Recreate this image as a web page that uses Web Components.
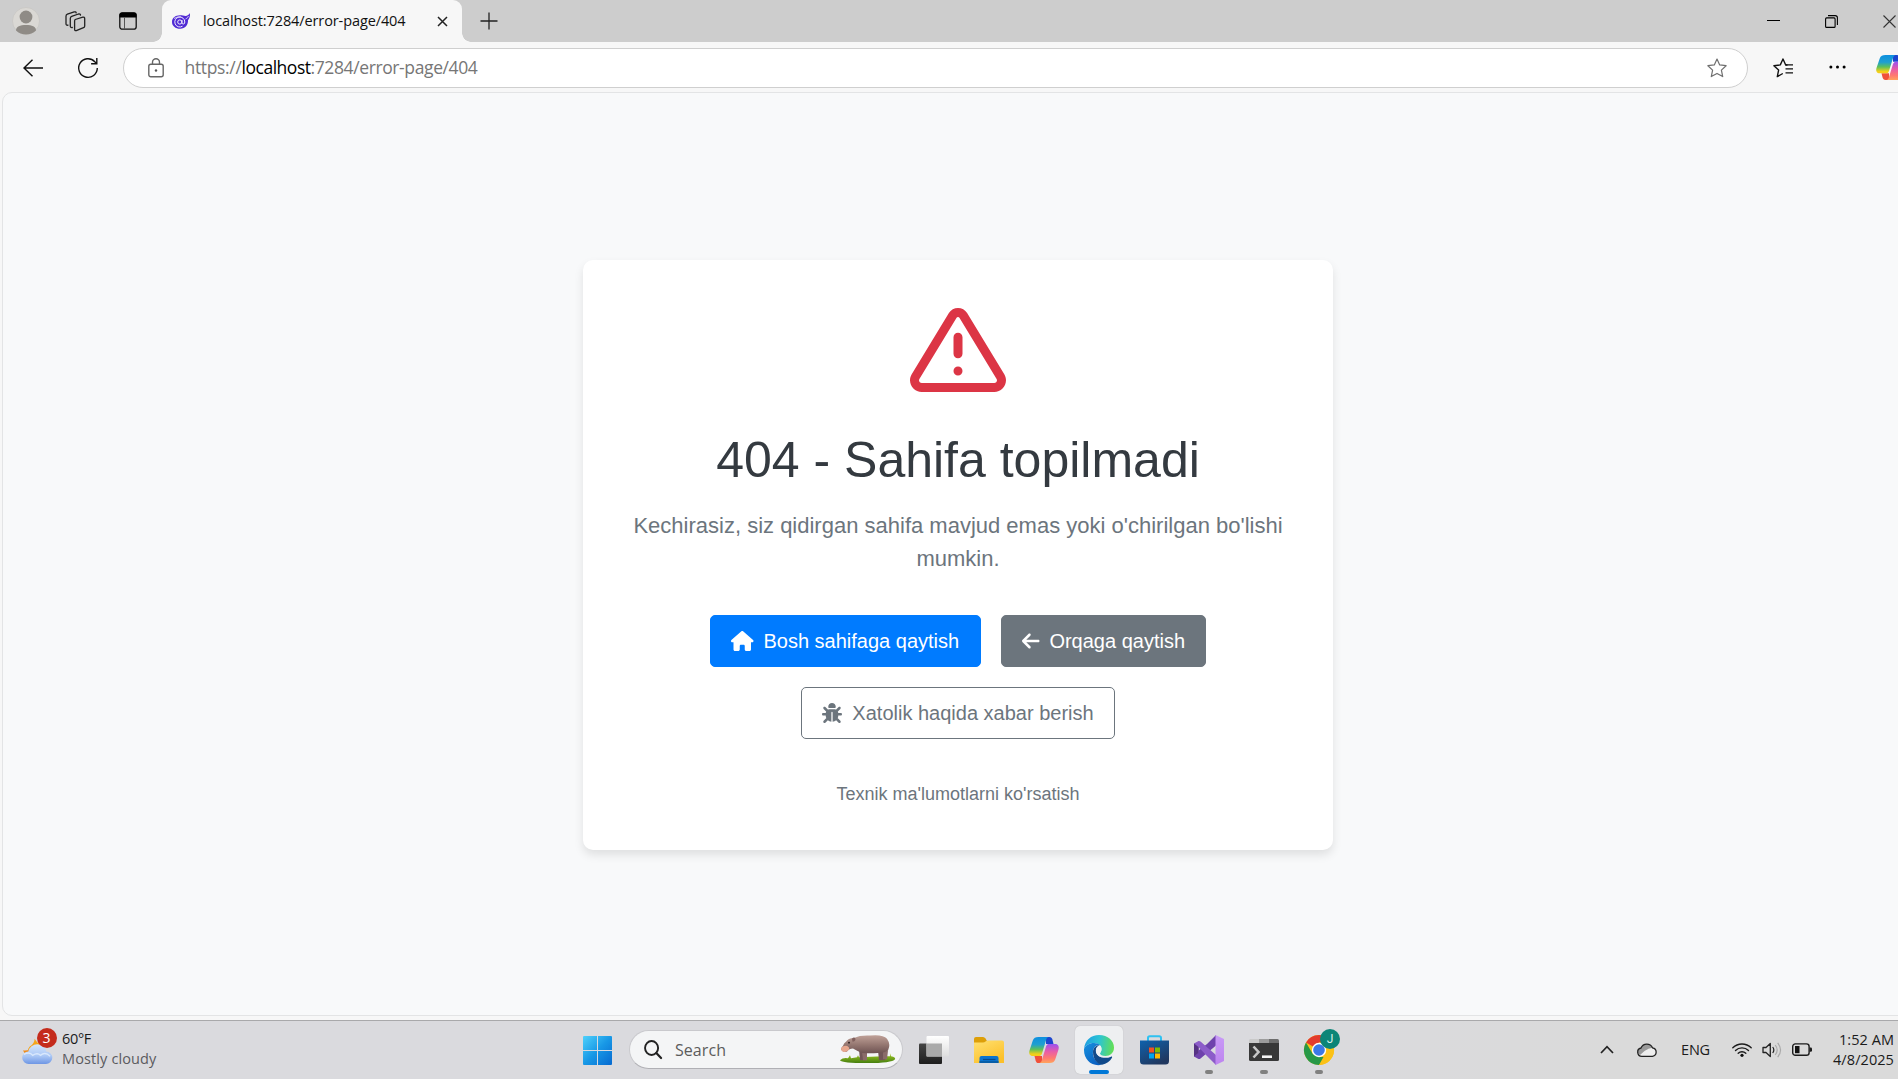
<!DOCTYPE html>
<html lang="uz">
<head>
<meta charset="utf-8">
<title>404 - Sahifa topilmadi</title>
<style>
html,body{margin:0;height:100%;overflow:hidden}
body{background:#f7f7f7;font-family:"Liberation Sans",Arial,sans-serif}
</style>
</head>
<body>
<desktop-screen></desktop-screen>
<script>
const COPILOT = p => `<defs>
<linearGradient id="${p}a" x1="0" y1="0" x2="0" y2="1"><stop offset="0" stop-color="#0d8fe0"/><stop offset=".4" stop-color="#1f9fd0"/><stop offset=".65" stop-color="#5cc05a"/><stop offset=".9" stop-color="#f3cf19"/></linearGradient>
<linearGradient id="${p}b" x1="0" y1="0" x2="0" y2="1"><stop offset="0" stop-color="#9a52f0"/><stop offset=".4" stop-color="#e85ca8"/><stop offset=".75" stop-color="#ff7a70"/><stop offset="1" stop-color="#ffa45c"/></linearGradient></defs>
<path d="M17 2h3.500c1.700 0 2.400 1 2.900 2.600L24.500 9H17z" fill="#1c45cf"/>
<path d="M13 28H9.500c-1.700 0-2.400-1-2.900-2.600L5.500 21H13z" fill="#f0503a"/>
<path d="M9.500 2h10c-1.300.3-2 1.500-2.500 3.200L13 18.500C12.300 20.600 11.300 21 9.500 21H4C.6 21-.3 18.500.5 15.500L3.800 5.500C4.600 3 6.500 2 9.500 2z" fill="url(#${p}a)"/>
<path d="M20.500 28h-10c1.300-.3 2-1.500 2.500-3.200L17 11.500c.7-2.100 1.700-2.500 3.500-2.500H26c3.400 0 4.300 2.500 3.500 5.500l-3.300 10c-.8 2.500-2.700 3.500-5.700 3.500z" fill="url(#${p}b)"/>`;

const ICONS = {
avatar:['0 0 28 28',`<circle cx="14" cy="14" r="13.5" fill="#dad8d4" stroke="#c4c3c0" stroke-width=".6"/><circle cx="14" cy="10" r="6.400" fill="#8f8b86"/><path d="M4 23.500c0-4 4-5.500 10-5.500s10 1.500 10 5.500c-5 5.200-15 5.200-20 0z" fill="#8f8b86"/>`],
spaces:['0 0 21 21',`<g fill="none" stroke="#222" stroke-width="1.300" stroke-linejoin="round" stroke-linecap="round"><path d="M10.200 8.500 17.800 6.200q1.900-.4 1.900 1.500v7.200q0 1.200-1.200 1.700l-7.200 3q-1.700.5-1.700-1.300v-8q0-1.400 .6-1.800z"/><path d="M7.300 16.500q-2 .3-2-1.500V7.400q0-1.500 1.400-2L13.500 3q1.700-.4 2 1"/><path d="M3 14.200q-2 .3-2-1.500V5.200q0-1.500 1.400-2L9.200.9q1.700-.4 2 1"/></g>`],
vtabs:['0 0 18 18',`<rect x=".8" y=".8" width="16.400" height="16.400" rx="2.500" fill="none" stroke="#111" stroke-width="1.300"/><path d="M.5 5.500V3Q.5.500 3 .500h12q2.500 0 2.500 2.500v2.500z" fill="#000"/><path d="M5.500 5.500v11.500" stroke="#555" stroke-width="1"/>`],
blazor:['0 0 18 16',`<path d="M18 0c.2 3.500-.5 5.400-2 7.300.2 4.800-2.800 8.500-7.800 8.500C3.400 15.800 0 12.700 0 8.900 0 5 3.200 2.200 8 2.200c2.400 0 3.700.7 5.400.7C15.400 2.900 17 1.800 18 0z" fill="#512bd4"/><path d="M10.500 13.200A5 5 0 1 1 12.800 9q0 2-1.500 2T10 9.500V7" fill="none" stroke="#f2edff" stroke-width="1"/><circle cx="7.800" cy="9" r="2.100" fill="none" stroke="#f2edff" stroke-width="1"/><path d="M2 5.500Q5 3.500 9 3.800M13.500 6q2.500-1 3-3" stroke="#e6deff" stroke-width=".8" fill="none"/>`],
x:['0 0 11 11',`<path d="M1 1l9 9M10 1l-9 9" stroke="#222" stroke-width="1.500"/>`],
plus:['0 0 18 18',`<path d="M9 .5v17M.5 9h17" stroke="#222" stroke-width="1.300"/>`],
min:['0 0 13 13',`<path d="M0 6.500h13" stroke="#000"/>`],
restore:['0 0 13 13',`<rect x=".6" y="2.900" width="9.500" height="9.500" rx="1" fill="none" stroke="#000" stroke-width="1.100"/><path d="M3 .6h7.200q2.200 0 2.200 2.200V10" fill="none" stroke="#000" stroke-width="1.100"/>`],
close:['0 0 13 13',`<path d="M.5.500l12 12M12.500.500l-12 12" stroke="#333" stroke-width="1.100"/>`],
back:['0 0 20 18',`<path d="M9.500.7 1 9l8.500 8.300M1 9h19" fill="none" stroke="#111" stroke-width="1.400"/>`],
refresh:['0 0 20 20',`<path d="M19.300 10A9.300 9.300 0 1 1 16.800 3.700L18.500 5.300M18.800 0v5.700h-5.700" fill="none" stroke="#111" stroke-width="1.400"/>`],
lock:['0 0 16 20',`<rect x=".8" y="6.300" width="14.400" height="12.500" rx="2" fill="none" stroke="#666" stroke-width="1.400"/><path d="M4.500 6V4.200a3.500 3.500 0 0 1 7 0V6" fill="none" stroke="#666" stroke-width="1.400"/><circle cx="8" cy="12.500" r="1.200" fill="#555"/>`],
star:['0 0 20 20',`<path d="M10 1l2.700 5.900 6.400.8-4.700 4.400 1.300 6.500L10 15.400l-5.700 3.200 1.300-6.500L.9 7.700l6.400-.8z" fill="none" stroke="#6f6f6f" stroke-width="1.200" stroke-linejoin="round"/>`],
favs:['0 0 20 20',`<path d="M14.500 7H12.700L10 1 7.300 6.900.9 7.700l4.700 4.400L4.300 18.600 9.800 15.500" fill="none" stroke="#111" stroke-width="1.400" stroke-linejoin="round"/><path d="M12.500 6.800H20M12.500 10.800H20M12.500 14.800H20" stroke="#111" stroke-width="1.300"/>`],
dots:['0 0 18 4',`<circle cx="2" cy="2" r="1.600"/><circle cx="9" cy="2" r="1.600"/><circle cx="16" cy="2" r="1.600"/>`],
copilot:['0 0 30 30',COPILOT('c')],
alert:['0 0 512 512',`<path fill="#dc3545" d="M248.400 84.300c1.600-2.700 4.500-4.300 7.600-4.300s6 1.600 7.600 4.300L461.900 410c1.400 2.300 2.100 4.900 2.100 7.500c0 8-6.500 14.500-14.500 14.500H62.500c-8 0-14.500-6.500-14.500-14.500c0-2.700 .7-5.300 2.100-7.500L248.400 84.300zm-41-25L9.100 385c-6 9.800-9.100 21-9.100 32.500C0 452 28 480 62.500 480h387c34.500 0 62.500-28 62.500-62.500c0-11.500-3.200-22.700-9.100-32.500L304.600 59.300C294.300 42.400 275.900 32 256 32s-38.300 10.400-48.600 27.300zM280 368a24 24 0 1 0 -48 0 24 24 0 1 0 48 0zm0-180c0-13.300-10.700-24-24-24s-24 10.700-24 24v88c0 13.300 10.700 24 24 24s24-10.700 24-24V188z"/>`],
house:['0 0 576 512',`<path fill="currentColor" d="M575.800 255.500c0 18-15 32.100-32 32.100h-32l.7 160.200c0 2.700-.2 5.400-.5 8.100V472c0 22.100-17.900 40-40 40H456c-1.100 0-2.200 0-3.300-.1c-1.400 .1-2.800 .1-4.200 .1H416 392c-22.100 0-40-17.900-40-40V448 384c0-17.700-14.300-32-32-32H256c-17.700 0-32 14.300-32 32v64 24c0 22.100-17.900 40-40 40H160 128.100c-1.500 0-3-.1-4.500-.2c-1.200 .1-2.400 .2-3.600 .2H104c-22.100 0-40-17.900-40-40V360c0-.9 0-1.900 .1-2.800V287.600H32c-18 0-32-14-32-32.100c0-9 3-17 10-24L266.400 8c7-7 15-8 22-8s15 2 21 7L564.800 231.500c8 7 12 15 11 24z"/>`],
arrow:['0 0 448 512',`<path fill="currentColor" d="M9.400 233.400c-12.500 12.500-12.500 32.800 0 45.300l160 160c12.500 12.500 32.800 12.500 45.300 0s12.500-32.800 0-45.300L109.200 288 416 288c17.700 0 32-14.300 32-32s-14.300-32-32-32l-306.700 0L214.600 118.600c12.500-12.500 12.500-32.800 0-45.300s-32.800-12.500-45.300 0l-160 160z"/>`],
bug:['0 0 512 512',`<path fill="currentColor" d="M256 0c53 0 96 43 96 96v3.600c0 15.700-12.700 28.400-28.400 28.400H188.400c-15.700 0-28.400-12.700-28.400-28.400V96c0-53 43-96 96-96zM41.400 105.400c12.500-12.500 32.800-12.500 45.300 0l64 64c.7 .7 1.300 1.400 1.900 2.100c14.200-7.300 30.400-11.400 47.500-11.400H312c17.100 0 33.200 4.100 47.500 11.400c.6-.7 1.200-1.400 1.900-2.100l64-64c12.500-12.500 32.800-12.500 45.300 0s12.500 32.800 0 45.300l-64 64c-.7 .7-1.400 1.300-2.100 1.900c6.200 12 10.100 25.300 11.100 39.500H480c17.700 0 32 14.300 32 32s-14.300 32-32 32H416c0 24.600-5.500 47.800-15.400 68.600c2.200 1.300 4.200 2.900 6 4.800l64 64c12.500 12.500 12.500 32.800 0 45.300s-32.800 12.500-45.300 0l-63.100-63.100c-24.500 21.800-55.800 36.200-90.300 39.600V240c0-8.800-7.200-16-16-16s-16 7.200-16 16V479.200c-34.500-3.400-65.800-17.800-90.300-39.600L86.600 502.600c-12.500 12.500-32.800 12.500-45.300 0s-12.500-32.800 0-45.300l64-64c1.900-1.900 3.900-3.400 6-4.800C101.500 367.800 96 344.600 96 320H32c-17.700 0-32-14.300-32-32s14.300-32 32-32H96.300c1.100-14.100 5-27.500 11.100-39.500c-.7-.6-1.400-1.200-2.100-1.900l-64-64c-12.500-12.500-12.500-32.800 0-45.300z"/>`],
weather:['0 0 32 32',`<defs><linearGradient id="wc" x1="0" y1="0" x2="0" y2="1"><stop offset="0" stop-color="#d5e6fd"/><stop offset=".6" stop-color="#a9c6f5"/><stop offset="1" stop-color="#6e96e4"/></linearGradient></defs><path d="M13 5l3 4 4-2v14H9L6 18q0-3 2-5 5-3 5-8z" fill="#f6a51c"/><path d="M1 17q8 1 11-6l2 8-9 4z" fill="#f08c1a"/><path d="M7 31a6.500 6.500 0 0 1-.5-13 9.500 9.500 0 0 1 18.500 0 6.500 6.500 0 0 1-.5 13z" fill="url(#wc)"/><path d="M2 21q6-3 9 1 5-3 8 0 5-4 10 1" fill="none" stroke="#eaf3ff" stroke-width="1.500" opacity=".7"/>`],
win:['0 0 29 29',`<defs><linearGradient id="wg" gradientUnits="userSpaceOnUse" x1="0" y1="0" x2="29" y2="29"><stop offset="0" stop-color="#4fd1fb"/><stop offset=".5" stop-color="#1898e6"/><stop offset="1" stop-color="#0669d0"/></linearGradient></defs><path fill="url(#wg)" d="M1 0h13v14H0V1q0-1 1-1zM15 0h13q1 0 1 1v13H15zM0 15h14v14H1q-1 0-1-1zM15 15h14v13q0 1-1 1H15z"/>`],
search:['0 0 19 19',`<circle cx="8" cy="8" r="6.900" fill="none" stroke="#222" stroke-width="2"/><path d="M13 13l5 5" stroke="#222" stroke-width="2.400" stroke-linecap="round"/>`],
hippo:['0 0 56 30',`<defs><linearGradient id="hp" x1="0" y1="0" x2="0" y2="1"><stop offset="0" stop-color="#c0a299"/><stop offset=".55" stop-color="#93756f"/><stop offset="1" stop-color="#6d5252"/></linearGradient><linearGradient id="gr" x1="0" y1="0" x2="0" y2="1"><stop offset="0" stop-color="#a4cc24"/><stop offset="1" stop-color="#457f10"/></linearGradient></defs><path d="M0 26q3-3 8-2l2-3 1 3 6-1 1-2 1 2 24-1 2-2 0 2 5 0 1-3 0 3q5 1 4 3-3 4-28 4T0 26z" fill="url(#gr)"/><path d="M19 15l8 1-1 10h-6zM38 16h8l-1 10h-6z" fill="#715557"/><path d="M22 17h5l0 9h-4zM43 16h5l-1 9h-4z" fill="#8a6b69"/><path d="M6 7q2-4 8-4Q20 0 30 .5 43-1 47 4q4 6 1 12-4 3-10 2.500-9 1-16 0Q16 16 13 14q-4 0-6 3-4 1-6-2 0-2 2-4 1-3 3-4z" fill="url(#hp)"/><path d="M1 14q1-3 5-3 4 1 3 4-2 3-5 2.500Q1 17 1 14z" fill="#e7a78e"/><path d="M12 4q2-3 3.500 0 0 3-3 3" fill="#80605d"/><circle cx="9" cy="8" r=".9" fill="#241818"/>`],
taskview:['0 0 30 28',`<defs><linearGradient id="t1" x1="0" y1="0" x2="0" y2="1"><stop offset="0" stop-color="#444"/><stop offset="1" stop-color="#1e1e1e"/></linearGradient><linearGradient id="t2" x1="0" y1="0" x2="0" y2="1"><stop offset="0" stop-color="#fff"/><stop offset="1" stop-color="#dedede"/></linearGradient></defs><rect y="7.500" width="23" height="20.500" rx="1" fill="url(#t1)"/><rect x="7.500" width="22.500" height="20.500" rx="1" fill="url(#t2)"/><rect x="7.500" y="7.500" width="15.500" height="13" fill="#aaa"/>`],
folder:['0 0 30 27',`<defs><linearGradient id="f1" x1="0" y1="0" x2=".6" y2="1"><stop offset="0" stop-color="#ffe070"/><stop offset="1" stop-color="#fcc02a"/></linearGradient></defs><path d="M0 2q0-2 2-2h7q1.500 0 2.500 1.500L13 4v8H0z" fill="#dd9f09"/><path d="M0 5.500h9q1.500 0 2.500-1T14 3.500h14q2 0 2 2V26H0z" fill="url(#f1)"/><path d="M5.500 26v-5q0-2 2-2h15q2 0 2 2v5z" fill="#0b74cf"/><path d="M5.500 26v-2h19v2" fill="#085ea8"/><path d="M9 22.500h12.500" stroke="#074a8c" stroke-width="1.200"/>`],
edge:['0 0 30 30',`<defs><linearGradient id="e1" x1="0" y1=".3" x2="1" y2=".4"><stop offset="0" stop-color="#1d9de2"/><stop offset=".5" stop-color="#2cc4d4"/><stop offset="1" stop-color="#63df55"/></linearGradient><linearGradient id="e2" x1="0" y1="0" x2=".7" y2="1"><stop offset="0" stop-color="#1691df"/><stop offset="1" stop-color="#0b5fc0"/></linearGradient></defs><path d="M0 14C1 5 7 0 15 0c9 0 15 6 15 12.500C30 18 26 21 21.500 21c-3.500 0-5.500-1.500-5.500-2.500s1.500-1.800 1.500-4.500c0-3.500-3.500-6-7.500-6C5 8 1.500 10.500 0 14z" fill="url(#e1)"/><path d="M0 14c1.500-3.500 5-6 10-6 2.500 0 4.500.8 6 2-4-.5-6.500 2.500-7 6-1 7 4 12 9 13.700C8 32 0 25 0 15z" fill="url(#e2)"/><path d="M16 10c-4 0-7 3-7 7 0 7 4 12 9 12.700 4.500-.7 8-3.500 10-7 .4-.9-.3-1.400-1-1-7 3-15 0-15-6.500 0-2.700 2-4.500 4-5.200z" fill="#114a8b"/><path d="M16.500 10.700c-3 .3-4.700 2.300-4.700 5 0 3 2 5.500 5.500 6.600-1.600-2-1.500-3.300-1.300-3.800.2-1.200 1.500-1.800 1.500-4.500 0-1.400-.3-2.300-1-3.300z" fill="#eef1f4"/>`],
store:['0 0 29 30',`<defs><linearGradient id="s1" x1="0" y1="0" x2=".6" y2="1"><stop offset="0" stop-color="#0f62ad"/><stop offset="1" stop-color="#20375f"/></linearGradient></defs><path d="M8 7V3q0-1.800 1.800-1.800h9.400Q21 1.200 21 3v4" fill="none" stroke="#2fc1f1" stroke-width="2"/><path d="M0 5.500h29V26q0 3.500-3.500 3.500h-22Q0 29.500 0 26z" fill="url(#s1)"/><path d="M9 12.500h5v5H9z" fill="#f25022"/><path d="M15 12.500h5v5h-5z" fill="#7fba00"/><path d="M9 18.500h5v5H9z" fill="#00a4ef"/><path d="M15 18.500h5v5h-5z" fill="#ffb900"/>`],
vs:['0 0 30 30',`<defs><linearGradient id="v1" x1="0" y1="0" x2="0" y2="1"><stop offset="0" stop-color="#c99bf7"/><stop offset="1" stop-color="#bd84ef"/></linearGradient></defs><path d="M0 8.500 4.500 12v6L0 21.500z" fill="#563284"/><path d="M0 21.500 4.500 24q1 .3 2-.5L22 10.500V0L13 9 0 19z" fill="#6e42ac"/><path d="M0 8.500 4.500 6q1-.3 2 .5L22 20v10L11 19 4.500 12 4.500 18 0 21.500z" fill="#8c5cc9"/><path d="M0 8.500 4.500 12v6L0 21.500z" fill="#563284"/><path d="M21.500 0 30 4v22l-8.500 4z" fill="url(#v1)"/>`],
term:['0 0 30 22',`<path d="M0 4V1.500Q0 0 1.500 0H10v4z" fill="#c9c9c9"/><path d="M10 0h10v4H10z" fill="#9c9c9c"/><path d="M20 0h8.500Q30 0 30 1.500V4H20z" fill="#6d6d6d"/><path d="M0 4h30v16.500q0 1.500-1.500 1.500h-27Q0 22 0 20.500z" fill="#383838"/><path d="M4.500 7.500 9.500 13l-5 5.500" fill="none" stroke="#c7c7c7" stroke-width="2.600"/><path d="M13 17.700h10" stroke="#f5f5f5" stroke-width="2.600"/>`],
chrome:['0 0 30 30',`<circle cx="15" cy="15" r="15" fill="#fbc116"/><path d="M15 15 2 7.500A15 15 0 0 1 28 7.500H15z" fill="#e33b2e"/><path d="M2 7.500 8.500 18.500 15 22h6.500L15 30A15 15 0 0 1 2 7.500z" fill="#279847"/><path d="M28 7.500H15v7l6.500 4L15 30A15 15 0 0 0 28 7.500z" fill="#fbc116"/><circle cx="15" cy="15" r="7.200" fill="#fff"/><circle cx="15" cy="15" r="5.800" fill="#3b78e7"/>`],
chev:['0 0 14 9',`<path d="M1 8l6-6.300L13 8" fill="none" stroke="#222" stroke-width="1.700"/>`],
cloud:['0 0 20 14',`<path d="M5 13.300A4.200 4.200 0 0 1 4 5 6.300 6.300 0 0 1 15.500 4.800 4.300 4.300 0 0 1 15.500 13.300z" fill="#eee"/><path d="M.8 9.500Q1 5.700 4 5a6.300 6.300 0 0 1 11.500-.2q-4 .2-8 3.200L3 12z" fill="#9a9a9a"/><path d="M5 13.300A4.200 4.200 0 0 1 4 5 6.300 6.300 0 0 1 15.500 4.800 4.300 4.300 0 0 1 15.500 13.300z" fill="none" stroke="#222" stroke-width="1.300"/>`],
wifi:['0 0 20 15',`<g fill="none" stroke="#1c1c1c" stroke-width="1.400" stroke-linecap="round"><path d="M.8 5.800a13 13 0 0 1 18.400 0M3.500 8.600a9.200 9.200 0 0 1 13 0M6.200 11.300a5.400 5.400 0 0 1 7.600 0"/></g><circle cx="10" cy="13.300" r="1.600" fill="#111"/>`],
vol:['0 0 20 16',`<path d="M1 5.500h3L8.300 1.500v13L4 10.500H1z" fill="none" stroke="#222" stroke-width="1.300" stroke-linejoin="round"/><path d="M10.700 5q2.300 3 0 6" fill="none" stroke="#222" stroke-width="1.200"/><path d="M13.200 3q4 5 0 10M15.700.8q5.700 7.200 0 14.400" fill="none" stroke="#aaa" stroke-width="1.200"/>`],
batt:['0 0 20 13',`<rect x=".7" y=".9" width="16.400" height="11.400" rx="2.600" fill="none" stroke="#1c1c1c" stroke-width="1.400"/><path d="M3 3h4.500v7.200H3z" fill="#111"/><path d="M17.500 4.500h1.200q1.300 0 1.300 1.100v2q0 1.200-1.300 1.200h-1.200z" fill="#1c1c1c"/>`]
};

class Base extends HTMLElement{
  constructor(){super();this.attachShadow({mode:'open'});}
}
function define(name,html){
  const t=document.createElement('template');t.innerHTML=html;
  customElements.define(name,class extends Base{
    constructor(){super();this.shadowRoot.append(t.content.cloneNode(true));}
  });
}

/* <ui-icon name w h>: inline SVG from the table above */
customElements.define('ui-icon',class extends Base{
  connectedCallback(){
    const [vb,body]=ICONS[this.getAttribute('name')];
    const w=this.getAttribute('w'),h=this.getAttribute('h');
    this.shadowRoot.innerHTML=`<style>:host{display:block;flex:none;width:${w}px;height:${h}px}svg{display:block;overflow:visible}</style><svg width="${w}" height="${h}" viewBox="${vb}" preserveAspectRatio="none">${body}</svg>`;
  }
});

/* <fit-label width>: one line of text tracked to a fixed width */
customElements.define('fit-label',class extends Base{
  connectedCallback(){
    this.shadowRoot.innerHTML=`<style>:host{display:block;flex:none;white-space:nowrap;font-family:"Open Sans","Noto Sans",sans-serif}span{display:inline-block}</style><span><slot></slot></span>`;
    const s=this.shadowRoot.querySelector('span'),want=+this.getAttribute('width');
    const n=this.textContent.length;
    s.style.letterSpacing=((want-s.getBoundingClientRect().width)/n)+'px';
    this.style.width=want+'px';
  }
});

define('tab-strip',`<style>
:host{display:flex;align-items:center;height:42px;background:#cdcdcd;overflow:hidden}
.tab{display:flex;align-items:center;width:300px;height:42px;margin-left:25px;background:#f7f7f7;border-radius:9px 9px 0 0;position:relative}
.tab::before,.tab::after{content:"";position:absolute;bottom:0;width:9px;height:9px}
.tab::before{left:-9px;background:radial-gradient(circle at 0 0,transparent 8.500px,#f7f7f7 9px)}
.tab::after{right:-9px;background:radial-gradient(circle at 100% 0,transparent 8.500px,#f7f7f7 9px)}
fit-label{font-size:14.500px;color:#111;margin:0 0 2px 13px}
</style>
<ui-icon name="avatar" w="28" h="28" style="margin-left:12px"></ui-icon>
<ui-icon name="spaces" w="21" h="21" style="margin-left:25px"></ui-icon>
<ui-icon name="vtabs" w="18" h="18" style="margin-left:33px"></ui-icon>
<div class="tab"><ui-icon name="blazor" w="18" h="16" style="margin-left:10px"></ui-icon><fit-label width="202.500">localhost:7284/error-page/404</fit-label><ui-icon name="x" w="11" h="11" style="margin-left:31.500px"></ui-icon></div>
<ui-icon name="plus" w="18" h="18" style="margin-left:18px;margin-bottom:1px"></ui-icon>
<ui-icon name="min" w="13" h="13" style="margin-left:auto;margin-bottom:1px"></ui-icon>
<ui-icon name="restore" w="13" h="13" style="margin-left:45px"></ui-icon>
<ui-icon name="close" w="13" h="13" style="margin:0 2px 0 45px"></ui-icon>`);

define('tool-bar',`<style>
:host{display:flex;align-items:center;height:50px;background:#f7f7f7;overflow:hidden}
.omni{display:flex;flex:none;align-items:center;box-sizing:border-box;width:1625px;height:40px;margin:1px 0 0 25px;border:1px solid #cfcfcf;border-radius:20px;background:#fff}
.url{display:flex;margin:0 0 1px 21px;font-size:17.500px;color:#767676}
.h{color:#000}
</style>
<ui-icon name="back" w="20" h="18" style="margin-left:23px;margin-top:1px"></ui-icon>
<ui-icon name="refresh" w="20" h="20" style="margin-left:35px;margin-top:1px"></ui-icon>
<div class="omni"><ui-icon name="lock" w="16" h="20" style="margin-left:23.500px"></ui-icon>
<div class="url"><fit-label width="57">https://</fit-label><fit-label class="h" width="69">localhost</fit-label><fit-label width="167">:7284/error-page/404</fit-label></div>
<ui-icon name="star" w="20" h="20" style="margin:0 20px 0 auto"></ui-icon></div>
<ui-icon name="favs" w="20" h="20" style="margin-left:25px;margin-top:1px"></ui-icon>
<ui-icon name="dots" w="17" h="4" style="margin-left:36px"></ui-icon>
<ui-icon name="copilot" w="30" h="29" style="margin-left:30px"></ui-icon>`);

define('action-button',`<style>
:host{display:flex;align-items:center;gap:10px;box-sizing:border-box;height:52px;padding:0 20.400px;border:1px solid;border-radius:5px;font-size:20px;white-space:nowrap}
:host([kind=primary]){background:#007bff;border-color:#007bff;color:#fff}
:host([kind=secondary]){background:#6c757d;border-color:#6c757d;color:#fff}
:host([kind=outline]){border-color:#6c757d;color:#6c757d}
::slotted(ui-icon){margin-bottom:1px}
</style><slot name="icon"></slot><span><slot></slot></span>`);

define('error-card',`<style>
:host{display:flex;flex-direction:column;align-items:center;box-sizing:border-box;width:750px;height:590px;padding:42px 50px 0;background:#fff;border-radius:10px;box-shadow:0 5px 10px rgba(0,0,0,.1)}
h1{margin:31.500px 0 19px;font-weight:400;font-size:50px;line-height:60px;color:#343a40;white-space:nowrap}
p{margin:0 0 40.500px;font-size:22px;line-height:33px;color:#6c757d;text-align:center}
.row{display:flex;gap:20px;flex-wrap:wrap;justify-content:center}
a{margin-top:42px;font-size:18px;line-height:27px;color:#6c757d}
</style>
<ui-icon name="alert" w="96" h="96"></ui-icon>
<h1>404 - Sahifa topilmadi</h1>
<p>Kechirasiz, siz qidirgan sahifa mavjud emas yoki o'chirilgan bo'lishi<br>mumkin.</p>
<div class="row">
<action-button kind="primary"><ui-icon slot="icon" name="house" w="22.500" h="20"></ui-icon>Bosh sahifaga qaytish</action-button>
<action-button kind="secondary"><ui-icon slot="icon" name="arrow" w="17.500" h="20"></ui-icon>Orqaga qaytish</action-button>
<action-button kind="outline"><ui-icon slot="icon" name="bug" w="20" h="20"></ui-icon>Xatolik haqida xabar berish</action-button>
</div>
<a>Texnik ma'lumotlarni ko'rsatish</a>`);

define('page-view',`<style>
:host{display:flex;box-sizing:border-box;height:924px;width:1912px;margin-left:2px;padding:167px 0 0 580px;background:#f8f9fa;border:1px solid #e3e4e5;border-radius:10px}
</style><error-card></error-card>`);

define('task-item',`<style>
:host{display:flex;align-items:center;justify-content:center;flex:none;width:48px;height:48px;position:relative;border-radius:5px}
:host([active]){background:#eeeff1;box-shadow:0 0 1px #aaa}
:host([active])::after,:host([open])::after{content:"";position:absolute;left:20px;bottom:0;width:8px;height:4px;border-radius:2px;background:#808080}
:host([active])::after{left:14px;width:20px;background:#0078d7}
::slotted([slot=badge]){position:absolute;left:25px;top:3px;width:20px;height:20px;border-radius:50%;background:#0b8577;color:#d7f0ec;font:12px/20px Roboto,sans-serif;text-align:center}
</style><slot></slot><slot name="badge"></slot>`);

define('task-bar',`<style>
:host{display:flex;align-items:flex-start;box-sizing:border-box;height:59px;border-top:1px solid #a9a9ab;background:linear-gradient(90deg,#dadade 0,#dadade 65%,#dadada 85%)}
.weather{display:flex;width:573px;height:56px;align-items:center}
.sky{position:relative;margin-left:22px}
.sky b{position:absolute;left:14.500px;top:-6px;width:20px;height:20px;border-radius:50%;background:#c42b1c;color:#fff;font:14px/20px "Open Sans",sans-serif;text-align:center}
.two{display:flex;flex-direction:column;font-size:14.500px;line-height:20px;color:#1b1b1b}
.dim{color:#5a5a5e}
.apps{display:flex;gap:7px;padding-top:5px}
.pill{display:flex;align-items:center;box-sizing:border-box;width:274px;height:39px;margin:4px 0 0 1px;border:1px solid #c9c9cd;border-bottom-color:#b0b0b5;border-radius:20px;background:#f4f5f6}
.pill fit-label{font-size:16px;margin-left:13px;color:#5c5c5c}
.tray{display:flex;align-items:center;height:57px;margin-left:auto;color:#1b1b1b}
.end{align-items:flex-end}
</style>
<div class="weather"><div class="sky"><ui-icon name="weather" w="31" h="31"></ui-icon><b>3</b></div>
<div class="two" style="margin-left:9px"><fit-label width="29">60°F</fit-label><fit-label class="dim" width="94.500">Mostly cloudy</fit-label></div></div>
<div class="apps">
<task-item><ui-icon name="win" w="29" h="29"></ui-icon></task-item>
<div class="pill"><ui-icon name="search" w="18" h="19" style="margin-left:14px"></ui-icon><fit-label width="51">Search</fit-label><ui-icon name="hippo" w="56" h="29" style="margin:0 6px 0 auto"></ui-icon></div>
<task-item><ui-icon name="taskview" w="30" h="28"></ui-icon></task-item>
<task-item><ui-icon name="folder" w="30" h="27"></ui-icon></task-item>
<task-item><ui-icon name="copilot" w="30" h="30"></ui-icon></task-item>
<task-item active><ui-icon name="edge" w="30" h="30"></ui-icon></task-item>
<task-item><ui-icon name="store" w="29" h="30"></ui-icon></task-item>
<task-item open><ui-icon name="vs" w="30" h="30"></ui-icon></task-item>
<task-item open><ui-icon name="term" w="30" h="22"></ui-icon></task-item>
<task-item open><ui-icon name="chrome" w="30" h="30"></ui-icon><span slot="badge">J</span></task-item>
</div>
<div class="tray">
<ui-icon name="chev" w="14" h="9"></ui-icon>
<ui-icon name="cloud" w="20" h="14" style="margin-left:23px"></ui-icon>
<fit-label width="29" style="margin-left:24px;font-size:14.500px">ENG</fit-label>
<ui-icon name="wifi" w="20" h="15" style="margin-left:22px"></ui-icon>
<ui-icon name="vol" w="20" h="16" style="margin-left:10px"></ui-icon>
<ui-icon name="batt" w="20" h="13" style="margin-left:10px"></ui-icon>
<div class="two end" style="margin:0 4px 0 21px"><fit-label width="55">1:52 AM</fit-label><fit-label width="61">4/8/2025</fit-label></div>
</div>`);

define('desktop-screen',`<style>
:host{display:flex;flex-direction:column;width:1898px;height:1079px;overflow:hidden;background:#f7f7f7}
tab-strip,tool-bar,page-view,task-bar{flex:none}
task-bar{margin-top:auto}
</style><tab-strip></tab-strip><tool-bar></tool-bar><page-view></page-view><task-bar></task-bar>`);
</script>
</body>
</html>
